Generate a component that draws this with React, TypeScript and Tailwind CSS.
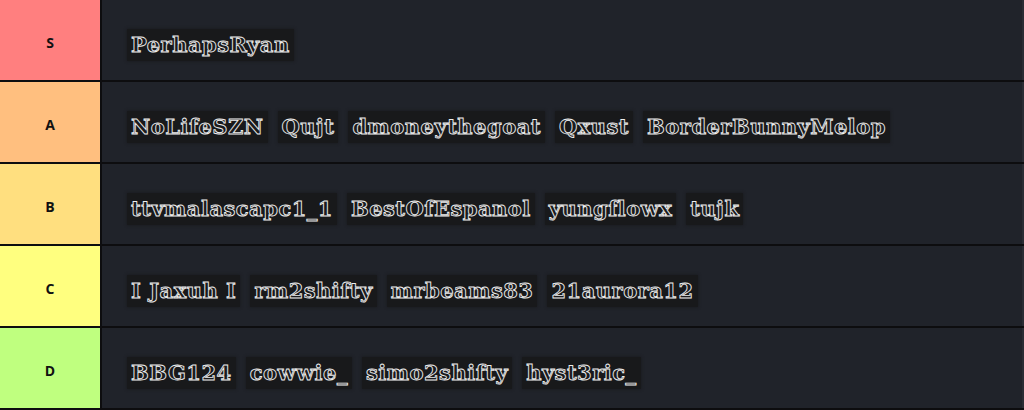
const tiers = [
  { label: "S", bg: "bg-[#ff7f7f]", items: ["PerhapsRyan"] },
  { label: "A", bg: "bg-[#ffbf7f]", items: ["NoLifeSZN", "Qujt", "dmoneythegoat", "Qxust", "BorderBunnyMelop"] },
  { label: "B", bg: "bg-[#ffdf7f]", items: ["ttvmalascapc1_1", "BestOfEspanol", "yungflowx", "tujk"] },
  { label: "C", bg: "bg-[#ffff7f]", items: ["I Jaxuh I", "rm2shifty", "mrbeams83", "21aurora12"] },
  { label: "D", bg: "bg-[#bfff7f]", items: ["BBG124", "cowwie_", "simo2shifty", "hyst3ric_"] },
];

export default function App() {
  return (
    <div className="w-[1024px] h-[410px] bg-[#0d0d0f] flex flex-col gap-[2px] overflow-hidden antialiased">
      {tiers.map((t) => (
        <div key={t.label} className="flex h-[80px] shrink-0 gap-[2px]">
          <div
            className={`w-[100px] shrink-0 flex items-center justify-center pt-[4px] ${t.bg} text-[14px] font-bold text-[#111] font-['Open_Sans',sans-serif]`}
          >
            {t.label}
          </div>
          <div className="flex-1 bg-[#20232a] flex items-center gap-[10px] pl-[25px] pt-[10px] border-r-2 border-[#2a2d34]">
            {t.items.map((name) => (
              <span
                key={name}
                className="bg-[#18191b] px-[4px] py-[3px] text-[21px] leading-[26px] tracking-[0.5px] font-bold text-[#1a1b1d] font-['DejaVu_Serif',serif] [-webkit-text-stroke:0.9px_#ededed] shadow-[0_0_3px_#18191b]"
              >
                {name}
              </span>
            ))}
          </div>
        </div>
      ))}
    </div>
  );
}
